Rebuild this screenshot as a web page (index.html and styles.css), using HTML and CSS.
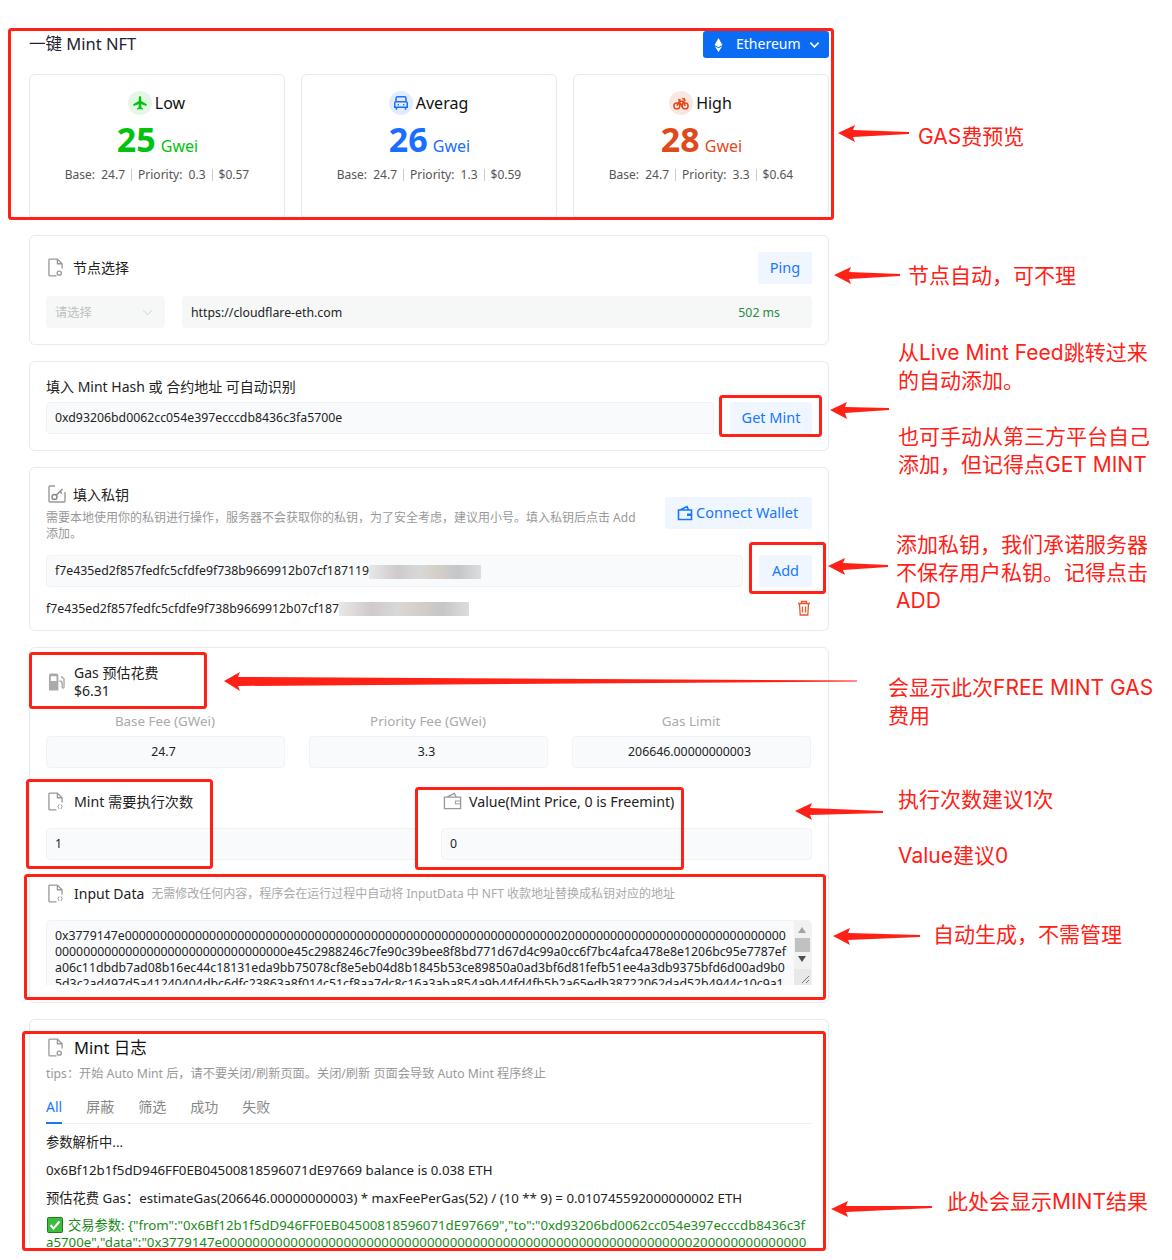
FILE: index.html
```html
<!DOCTYPE html>
<html lang="zh">
<head>
<meta charset="utf-8">
<title>一键 Mint NFT</title>
<link rel="stylesheet" href="styles.css">
</head>
<body>
<div class="page">
  <main class="main">
    <header class="top">
      <h1 class="page-title">一键 Mint NFT</h1>
      <button class="chain">
        <svg class="chain-eth" viewBox="0 0 10 16"><path d="M5 0 9.500 8 5 10.600.5 8zM.8 9.300 5 11.800l4.200-2.500L5 16z" fill="#fff"/></svg>
        <span>Ethereum</span>
        <svg class="chain-arrow" viewBox="0 0 12 8"><path d="M1.500 1.500 6 6l4.500-4.500" fill="none" stroke="#fff" stroke-width="1.800"/></svg>
      </button>
    </header>

    <section class="gas-row">
      <article class="gas-card">
        <div class="gas-head">
          <span class="gas-icon low-bg"><svg viewBox="0 0 24 24"><path d="M12 3.500c1 0 1.500 1.500 1.500 3.500v2.500l6.500 4v2l-6.500-2v3.500l2 1.500v1.500L12 19l-3.500 1v-1.500l2-1.500v-3.500L4 15.500v-2l6.500-4V7c0-2 .5-3.500 1.500-3.500z" fill="#00c20f"/></svg></span>
          <span>Low</span>
        </div>
        <div class="gas-price low"><b>25</b><span>Gwei</span></div>
        <div class="gas-meta"><span>Base:&nbsp; 24.7</span><span>Priority:&nbsp; 0.3</span><span>$0.57</span></div>
      </article>
      <article class="gas-card">
        <div class="gas-head">
          <span class="gas-icon avg-bg"><svg viewBox="0 0 24 24" fill="none" stroke="#1a6dff" stroke-width="1.800"><path d="M8 4.500h8a2 2 0 0 1 2 2v4H6v-4a2 2 0 0 1 2-2zM6 10.500h12a1.500 1.500 0 0 1 1.500 1.500v5h-15v-5A1.500 1.500 0 0 1 6 10.500z"/><path d="M6.500 17v3M17.500 17v3M8 14h1.500M14.500 14H16"/></svg></span>
          <span>Averag</span>
        </div>
        <div class="gas-price avg"><b>26</b><span>Gwei</span></div>
        <div class="gas-meta"><span>Base:&nbsp; 24.7</span><span>Priority:&nbsp; 1.3</span><span>$0.59</span></div>
      </article>
      <article class="gas-card">
        <div class="gas-head">
          <span class="gas-icon high-bg"><svg viewBox="0 0 24 24" fill="none" stroke="#e04a1a" stroke-width="1.800"><circle cx="7" cy="15.500" r="3.500"/><circle cx="17" cy="15.500" r="3.500"/><path d="M7 15.500 10 10h5l2 5.500M10 10l2.500 5.500L15 10M13.500 7H16l1 3M8.500 8h3"/></svg></span>
          <span>High</span>
        </div>
        <div class="gas-price high"><b>28</b><span>Gwei</span></div>
        <div class="gas-meta"><span>Base:&nbsp; 24.7</span><span>Priority:&nbsp; 3.3</span><span>$0.64</span></div>
      </article>
    </section>

    <section class="card card-node">
      <div class="row-between">
        <div class="title title-cjk">
          <svg class="ico-doc" viewBox="0 0 16 20"><path d="M2 1h8l5 5v5M10 1v5h5M9 19H2a1 1 0 0 1-1-1V2a1 1 0 0 1 1-1" fill="none" stroke="#999" stroke-width="1.400"/><circle cx="12" cy="16" r="2.200" fill="none" stroke="#999" stroke-width="1.400"/></svg>
          <span>节点选择</span>
        </div>
        <button class="btn btn-ping">Ping</button>
      </div>
      <div class="node-fields">
        <div class="select"><span>请选择</span><svg viewBox="0 0 12 8"><path d="M1 1.500 6 6.500l5-5" fill="none" stroke="#ccc" stroke-width="1.100"/></svg></div>
        <div class="url"><span>https://cloudflare-eth.com</span><span class="ms">502 ms</span></div>
      </div>
    </section>

    <section class="card card-hash">
      <label class="hash-label">填入 Mint Hash 或 合约地址 可自动识别</label>
      <div class="field-row">
        <div class="input grow">0xd93206bd0062cc054e397ecccdb8436c3fa5700e</div>
        <button class="btn btn-mint">Get Mint</button>
      </div>
    </section>

    <section class="card card-key">
      <div class="key-top">
        <div class="key-info">
          <div class="title title-cjk title-key">
            <svg class="ico-key" viewBox="0 0 18 20"><path d="M7 2H2a1 1 0 0 0-1 1v14a1 1 0 0 0 1 1h14a1 1 0 0 0 1-1V8" fill="none" stroke="#999" stroke-width="1.400"/><circle cx="6.500" cy="13" r="2.500" fill="none" stroke="#888" stroke-width="1.400"/><path d="m8.500 11 6-6M12 7.500l2 2" fill="none" stroke="#888" stroke-width="1.400"/></svg>
            <span>填入私钥</span>
          </div>
          <p class="desc">需要本地使用你的私钥进行操作，服务器不会获取你的私钥，为了安全考虑，建议用小号。填入私钥后点击 Add 添加。</p>
        </div>
        <button class="btn btn-wallet">
          <svg viewBox="0 0 16 16"><path d="M1.500 5h13v9.500h-13zM3 5l7-3.500L11.500 5" fill="none" stroke="#1677ff" stroke-width="1.600"/><rect x="10" y="8.500" width="4.500" height="2.500" fill="#1677ff"/></svg>
          <span>Connect Wallet</span>
        </button>
      </div>
      <div class="field-row key-field">
        <div class="input grow">f7e435ed2f857fedfc5cfdfe9f738b9669912b07cf187119<span class="blur blur-a"></span></div>
        <button class="btn btn-add">Add</button>
      </div>
      <div class="key-saved">
        <span>f7e435ed2f857fedfc5cfdfe9f738b9669912b07cf187<span class="blur blur-b"></span></span>
        <svg class="trash" viewBox="0 0 14 16"><path d="M1 3.500h12M4.500 3.500V1.500h5v2M2.500 3.500l.7 11.500h7.600l.7-11.500M5.500 6.500v6M8.500 6.500v6" fill="none" stroke="#e8562a" stroke-width="1.300"/></svg>
      </div>
    </section>

    <section class="card card-gas">
      <div class="title title-wide gas-title">
        <svg class="ico-pump" viewBox="0 0 18 20"><path d="M1 3a2 2 0 0 1 2-2h6a2 2 0 0 1 2 2v16H1zm2 1v5h6V4z" fill="#aaa" fill-rule="evenodd"/><path d="M12 9c3 0 3 2 3 3v3c0 2 2 2 2 0V7l-3-3" fill="none" stroke="#aaa" stroke-width="1.500"/></svg>
        <span class="gas-text">Gas 预估花费<br>$6.31</span>
      </div>
      <div class="fee-grid">
        <div class="fee"><label>Base Fee (GWei)</label><div class="input center">24.7</div></div>
        <div class="fee"><label>Priority Fee (GWei)</label><div class="input center">3.3</div></div>
        <div class="fee"><label>Gas Limit</label><div class="input center">206646.00000000003</div></div>
      </div>
      <div class="pair">
        <div class="pair-col">
          <div class="title title-wide">
            <svg class="ico-doc" viewBox="0 0 16 20"><path d="M2 1h8l5 5v5M10 1v5h5M9 19H2a1 1 0 0 1-1-1V2a1 1 0 0 1 1-1" fill="none" stroke="#999" stroke-width="1.400"/><path d="m12 13-1.500 2.500L12 18M14 13l1 2.500-1 2.500" fill="none" stroke="#999"/></svg>
            <span>Mint 需要执行次数</span>
          </div>
          <div class="input">1</div>
        </div>
        <div class="pair-col">
          <div class="title title-wide">
            <svg class="ico-wallet" viewBox="0 0 20 18"><path d="M1.500 5h17v12h-17zM4 5l8-4 2 4" fill="none" stroke="#999" stroke-width="1.400"/><rect x="13" y="9" width="5.500" height="3" fill="none" stroke="#999"/></svg>
            <span>Value(Mint Price, 0 is Freemint)</span>
          </div>
          <div class="input">0</div>
        </div>
      </div>
      <div class="title title-wide data-title">
        <svg class="ico-doc" viewBox="0 0 16 20"><path d="M2 1h8l5 5v5M10 1v5h5M9 19H2a1 1 0 0 1-1-1V2a1 1 0 0 1 1-1" fill="none" stroke="#999" stroke-width="1.400"/><path d="m12 13-1.500 2.500L12 18M14 13l1 2.500-1 2.500" fill="none" stroke="#999"/></svg>
        <span class="data-name">Input Data</span>
        <span class="hint">无需修改任何内容，程序会在运行过程中自动将 InputData 中 NFT 收款地址替换成私钥对应的地址</span>
      </div>
      <div class="textarea">
        <div class="hex">0x3779147e0000000000000000000000000000000000000000000000000000000000000020000000000000000000000000000000</div>
        <div class="hex">000000000000000000000000000000000e45c2988246c7fe90c39bee8f8bd771d67d4c99a0cc6f7bc4afca478e8e1206bc95e7787ef</div>
        <div class="hex">a06c11dbdb7ad08b16ec44c18131eda9bb75078cf8e5eb04d8b1845b53ce89850a0ad3bf6d81fefb51ee4a3db9375bfd6d00ad9b0</div>
        <div class="hex">5d3c2ad497d5a41240404dbc6dfc23863a8f014c51cf8aa7dc8c16a3aba854a9b44fd4fb5b2a65edb38722062dad52b4944c10c9a1</div>
        <div class="scroll">
          <svg class="sc-up" viewBox="0 0 8 6"><path d="M4 0 8 6H0z" fill="#a3a3a3"/></svg>
          <span class="thumb"></span>
          <svg class="sc-down" viewBox="0 0 8 6"><path d="M0 0h8L4 6z" fill="#505050"/></svg>
          <span class="grip"><svg viewBox="0 0 10 10"><path d="M9 2 2 9M9 6 6 9" stroke="#777" fill="none"/></svg></span>
        </div>
      </div>
    </section>

    <section class="card card-log">
      <div class="title title-wide log-title">
        <svg class="ico-doc" viewBox="0 0 16 20"><path d="M2 1h8l5 5v5M10 1v5h5M9 19H2a1 1 0 0 1-1-1V2a1 1 0 0 1 1-1" fill="none" stroke="#999" stroke-width="1.400"/><circle cx="12" cy="16" r="2.200" fill="none" stroke="#999" stroke-width="1.400"/></svg>
        <span>Mint 日志</span>
      </div>
      <p class="tips">tips：开始 Auto Mint 后，请不要关闭/刷新页面。关闭/刷新 页面会导致 Auto Mint 程序终止</p>
      <nav class="tabs">
        <span class="tab active">All</span><span class="tab">屏蔽</span><span class="tab">筛选</span><span class="tab">成功</span><span class="tab">失败</span>
      </nav>
      <p class="log">参数解析中...</p>
      <p class="log">0x6Bf12b1f5dD946FF0EB04500818596071dE97669 balance is 0.038 ETH</p>
      <p class="log">预估花费 Gas：estimateGas(206646.00000000003) * maxFeePerGas(52) / (10 ** 9) = 0.010745592000000002 ETH</p>
      <p class="log log-ok"><svg class="check" viewBox="0 0 16 16"><rect x=".5" y=".5" width="15" height="15" rx="1" fill="#3dbb3d" stroke="#1f7a1f"/><path d="m3.500 8 3 3.500 6-7" fill="none" stroke="#fff" stroke-width="2"/></svg>交易参数: {"from":"0x6Bf12b1f5dD946FF0EB04500818596071dE97669","to":"0xd93206bd0062cc054e397ecccdb8436c3f<br>a5700e","data":"0x3779147e00000000000000000000000000000000000000000000000000000000000000200000000000000</p>
    </section>
  </main>

  <svg class="marks" viewBox="0 0 1172 1260" aria-hidden="true">
    <g fill="none" stroke="#ff2116" stroke-width="3">
      <rect x="9.500" y="29.500" width="823" height="189" rx="2"/>
      <rect x="720.500" y="396.500" width="100" height="39" rx="2"/>
      <rect x="750.500" y="543.500" width="74" height="49" rx="2"/>
      <rect x="30.500" y="653.500" width="175" height="54" rx="2"/>
      <rect x="27.500" y="780.500" width="184" height="87" rx="2"/>
      <rect x="416.500" y="788.500" width="266" height="80" rx="2"/>
      <rect x="25.500" y="875.500" width="799" height="123" rx="2"/>
      <rect x="23.500" y="1032.500" width="801" height="217" rx="2"/>
    </g>
    <g fill="#ff2116">
      <path d="M838 133 855 125 853 130 909 132 909 134 853 137 855 142z"/>
      <path d="M834 275 851 267 849 272 900 274 900 276 849 279 851 284z"/>
      <path d="M830 410 847 402 845 407 889 408 889 410 845 413 847 419z"/>
      <path d="M828 566 845 558 843 563 888 565 888 567 843 570 845 575z"/>
      <path d="M224 681 240 672 238 677 857 680.500 857 681.500 238 686 240 691z"/>
      <path d="M795 811 812 803 810 808 883 811 883 813 810 815 812 820z"/>
      <path d="M833 936 850 928 848 933 920 935 920 937 848 940 850 945z"/>
      <path d="M831 1209 848 1201 846 1206 932 1206 932 1208 846 1212 848 1217z"/>
    </g>
  </svg>

  <aside class="note n-gas">GAS费预览</aside>
  <aside class="note n-node">节点自动，可不理</aside>
  <aside class="note n-hash">从Live Mint Feed跳转过来<br>的自动添加。<br><br>也可手动从第三方平台自己<br>添加，但记得点GET MINT</aside>
  <aside class="note n-key">添加私钥，我们承诺服务器<br>不保存用户私钥。记得点击<br>ADD</aside>
  <aside class="note n-fee">会显示此次FREE MINT GAS<br>费用</aside>
  <aside class="note n-count">执行次数建议1次<br><br>Value建议0</aside>
  <aside class="note n-data">自动生成，不需管理</aside>
  <aside class="note n-log">此处会显示MINT结果</aside>
</div>
</body>
</html>
```

FILE: styles.css
```css
* { box-sizing: border-box; }
html, body { margin: 0; padding: 0; background: #fff; }
body {
  font-family: "Noto Sans", "Noto Sans CJK SC", sans-serif;
  color: #1a1a1a;
  font-size: 12.300px;
}
.page { position: relative; width: 1172px; height: 1260px; overflow: hidden; background: #fff; }
.main { width: 800px; margin-left: 29px; padding-top: 31px; }
button { font-family: inherit; border: 0; cursor: pointer; }

.top { display: flex; justify-content: space-between; align-items: center; height: 27px; }
.page-title { margin: 0; padding-bottom: 2px; font-size: 16.500px; font-weight: 400; color: #223; line-height: 25px; }
.chain {
  width: 126px; height: 27px; background: #0a6cf5; color: #fff; border-radius: 3px;
  display: flex; align-items: center; padding: 0 0 2px 11px; font-size: 14px;
}
.chain-eth { width: 9px; height: 14px; margin: 2px 13px 0 0; flex: none; }
.chain-arrow { width: 11px; height: 8px; margin: 2px 0 0 8px; flex: none; }

.gas-row { display: grid; grid-template-columns: repeat(3, 256px); gap: 16px; margin-top: 16px; }
.gas-card { height: 145px; border: 1px solid #e6ebf1; border-radius: 6px; padding-top: 16px; text-align: center; }
.gas-head { display: flex; justify-content: center; align-items: center; gap: 3px; height: 24px; font-size: 16px; color: #111; padding-right: 1px; }
.gas-icon { width: 24px; height: 24px; border-radius: 50%; display: flex; align-items: center; justify-content: center; }
.gas-icon svg { width: 20px; height: 20px; }
.low-bg { background: #e2f7e4; }
.avg-bg { background: #e1ecff; }
.high-bg { background: #fbe7e1; }
.gas-price { display: flex; justify-content: center; align-items: baseline; gap: 5px; height: 44px; margin-top: 2px; font-size: 16px; line-height: 44px; padding-left: 1px; }
.gas-price b { font-size: 34px; font-weight: 700; }
.low { color: #00c20f; }
.avg { color: #1a6dff; }
.high { color: #e04a1a; }
.gas-meta { display: flex; justify-content: center; margin-top: 8px; font-size: 12px; line-height: 12px; color: #555; }
.gas-meta span + span { border-left: 1px solid #ccc; margin-left: 6px; padding-left: 6px; }

.card { border: 1px solid #e6ebf1; border-radius: 6px; margin-top: 16px; padding: 16px; }
.card-node { height: 110px; }
.card-hash { height: 90px; }
.card-key { height: 164px; }
.card-gas { height: 356px; padding-top: 16px; }
.card-log { height: 231px; overflow: hidden; border-bottom: 0; }
.row-between { display: flex; justify-content: space-between; align-items: center; }
.title { display: flex; align-items: center; gap: 10px; font-size: 14px; color: #222; padding-left: 2px; }
.title-cjk { padding-bottom: 2px; }
.title-key { padding-bottom: 3px; }
.title-wide { gap: 11px; }
.ico-doc { width: 15px; height: 19px; flex: none; }
.ico-key { width: 18px; height: 20px; flex: none; margin-right: -3px; }
.ico-pump { width: 17px; height: 20px; flex: none; margin-right: -2px; }
.ico-wallet { width: 19px; height: 18px; flex: none; margin-right: -4px; }

.btn { height: 32px; background: #f0f6ff; color: #1677ff; font-size: 14.500px; border-radius: 3px; padding: 0 0 2px; }
.btn-ping { width: 54px; }
.node-fields { display: flex; gap: 17px; margin-top: 12px; }
.select { width: 119px; height: 32px; background: #f6f8f8; border-radius: 4px; display: flex; align-items: center; justify-content: space-between; padding: 0 12px 0 9px; color: #c0c0c0; }
.select svg { width: 11px; height: 7px; }
.url { flex: 1; height: 32px; background: #f6f8f8; border-radius: 4px; display: flex; align-items: center; justify-content: space-between; padding: 0 32px 0 9px; color: #222; }
.ms { color: #2b8a3e; }

.hash-label { display: block; font-size: 14px; line-height: 18px; margin-top: 0; color: #222; }
.field-row { display: flex; gap: 16px; margin-top: 6px; }
.input { height: 32px; line-height: 30px; background: #f8fafc; border: 1px solid #eff2f6; border-radius: 4px; padding: 0 8px; color: #222; white-space: nowrap; }
.grow { flex: 1; position: relative; }
.center { text-align: center; padding-right: 12px; }
.btn-mint { width: 82px; }

.key-top { display: flex; justify-content: space-between; align-items: flex-start; }
.key-info { width: 600px; }
.desc { margin: 3px 0 0; font-size: 12px; line-height: 16px; color: #999; }
.btn-wallet { display: flex; align-items: center; gap: 3px; margin-top: 13px; width: 147px; padding: 0 12px 2px; }
.btn-wallet svg { width: 16px; height: 16px; flex: none; margin-top: 2px; }
.key-field { margin-top: 13px; }
.btn-add { width: 53px; }
.key-saved { display: flex; justify-content: space-between; align-items: center; margin-top: 12px; height: 18px; padding-right: 1px; color: #222; }
.trash { width: 14px; height: 16px; }
.blur { display: inline-block; height: 14px; vertical-align: middle; background: linear-gradient(90deg, #e8e8e8, #cfcacc 25%, #d8d8d8 45%, #d6cfc9 60%, #c4c6c9 80%, #dcdedd); filter: blur(.6px); }
.blur-a { width: 112px; }
.blur-b { width: 130px; }

.gas-text { font-size: 14px; line-height: 18px; }
.gas-title { height: 36px; }
.fee-grid { display: grid; grid-template-columns: repeat(3, 239px); gap: 24px; margin-top: 12px; }
.fee label { display: block; text-align: center; font-size: 13.400px; line-height: 18px; color: #aaa; margin-bottom: 6px; padding-right: 1px; }
.pair { display: grid; grid-template-columns: 371px 371px; gap: 24px; margin-top: 23px; }
.pair-col .title { height: 20px; margin-bottom: 17px; font-size: 14.200px; }
.data-title { margin-top: 23px; height: 20px; }
.data-name { margin-right: -4px; }
.hint { color: #aaa; font-size: 12px; }
.textarea { position: relative; height: 65px; margin-top: 17px; padding: 7px 8px 0; background: #f8fafc; border: 1px solid #eff2f6; border-bottom: 0; border-radius: 5px 5px 0 0; overflow: hidden; }
.hex { font-size: 12.300px; line-height: 16px; height: 16px; color: #222; white-space: nowrap; width: 733px; overflow: hidden; }
.scroll { position: absolute; top: 0; right: 0; bottom: 0; width: 17px; background: #f1f1f1; }
.thumb { position: absolute; left: 1px; right: 1px; top: 17px; height: 14px; background: #c1c1c1; }
.sc-up, .sc-down { position: absolute; left: 4px; width: 8px; height: 6px; }
.sc-up { top: 6px; }
.sc-down { top: 35px; }
.grip { position: absolute; left: 0; right: 0; bottom: 0; height: 16px; background: #e8e8e8; }
.grip svg { position: absolute; right: 1px; bottom: 1px; width: 10px; height: 10px; }

.log-title { font-size: 16.500px; color: #111; height: 26px; margin-top: -2px; }
.tips { margin: 5px 0 0; font-size: 12.200px; line-height: 18px; color: #999; }
.tabs { display: flex; gap: 24px; margin-top: 11px; height: 30px; border-bottom: 1px solid #f0f0f0; margin-bottom: 9px; font-size: 14px; color: #888; }
.tab { line-height: 26px; height: 30px; }
.active { color: #1677ff; border-bottom: 2px solid #1677ff; }
.log { margin: 0 0 10px; font-size: 13.270px; line-height: 18px; color: #222; white-space: nowrap; }
.log-ok { color: #1b8a1b; margin: 1px 0 0; line-height: 17px; }
.check { width: 16px; height: 16px; vertical-align: -3px; margin: 0 5px 0 1px; }

.marks { position: absolute; left: 0; top: 0; width: 1172px; height: 1260px; pointer-events: none; }
.note { position: absolute; color: #ff2116; font-size: 21px; line-height: 28px; white-space: nowrap; font-family: "Inter", "Noto Sans CJK SC", sans-serif; }
.n-gas { left: 918px; top: 123px; }
.n-node { left: 908px; top: 262px; }
.n-hash { left: 898px; top: 339px; }
.n-key { left: 896px; top: 531px; }
.n-fee { left: 888px; top: 674px; }
.n-count { left: 898px; top: 786px; }
.n-data { left: 933px; top: 921px; }
.n-log { left: 947px; top: 1188px; }
```
